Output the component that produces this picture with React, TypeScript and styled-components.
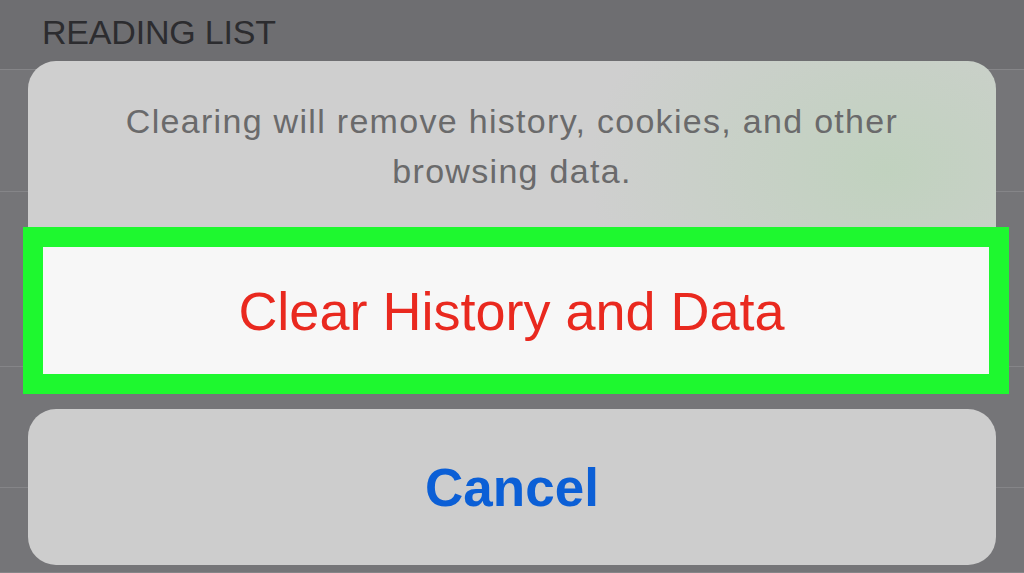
import React from "react";
import styled, { createGlobalStyle } from "styled-components";

const Global = createGlobalStyle`
  html, body { margin: 0; padding: 0; }
  body {
    background: #6f6f72;
    font-family: "Liberation Sans", Arial, sans-serif;
    overflow: hidden;
  }
`;

const Screen = styled.div`
  position: relative;
  width: 1024px;
  height: 573px;
  overflow: hidden;
  background: #747477;
`;

const SectionHeader = styled.div`
  height: 70px;
  box-sizing: border-box;
  padding: 15px 0 0 42px;
  background: #6e6e71;
  color: #2c2c2f;
  font-size: 34px;
  line-height: 34px;
  letter-spacing: -0.2px;
  border-bottom: 1px solid #858588;
`;

const Row = styled.div<{ $h: number }>`
  height: ${(p) => p.$h}px;
  box-sizing: border-box;
  border-bottom: 1px solid #858588;
  background: #757578;
`;

const Overlay = styled.div`
  position: absolute;
  inset: 0;
  display: flex;
  flex-direction: column;
  padding: 61px 28px 0 28px;
`;

const MessageCard = styled.div`
  display: flex;
  flex-direction: column;
  border-radius: 28px 28px 0 0;
  background:
    radial-gradient(ellipse 300px 220px at 860px 110px, rgba(192, 210, 190, 0.95), rgba(200, 212, 198, 0) 100%),
    #cfcfcf;
`;

const Message = styled.p`
  margin: 0;
  height: 166px;
  box-sizing: border-box;
  padding-top: 35px;
  text-align: center;
  color: #6a6a6b;
  font-size: 34px;
  line-height: 50px;
  letter-spacing: 1.3px;
`;

const Highlight = styled.div`
  margin: 0 -13px 0 -5px;
  border: 20px solid #1ef82f;
`;

const ActionButton = styled.button<{ $color: string; $bold?: boolean; $size: number }>`
  display: flex;
  align-items: center;
  justify-content: center;
  width: 100%;
  border: none;
  font-family: "Liberation Sans", Arial, sans-serif;
  font-size: ${(p) => p.$size}px;
  font-weight: ${(p) => (p.$bold ? 700 : 400)};
  color: ${(p) => p.$color};
  cursor: pointer;
`;

const DestructiveButton = styled(ActionButton)`
  height: 127px;
  padding: 0 9px 0 0;
  background: #f7f7f7;
`;

const CancelButton = styled(ActionButton)`
  margin-top: 15px;
  height: 156px;
  padding: 0;
  border-radius: 28px;
  background: #cdcdcd;
`;

export default function App() {
  return (
    <Screen>
      <Global />
      <SectionHeader>READING LIST</SectionHeader>
      <Row $h={122} />
      <Row $h={175} />
      <Row $h={121} />
      <Row $h={85} />
      <Overlay>
        <MessageCard>
          <Message>
            Clearing will remove history, cookies, and other
            <br />
            browsing data.
          </Message>
          <Highlight>
            <DestructiveButton $color="#e9291f" $size={54}>
              Clear History and Data
            </DestructiveButton>
          </Highlight>
        </MessageCard>
        <CancelButton $color="#0b5fd6" $size={53} $bold>
          Cancel
        </CancelButton>
      </Overlay>
    </Screen>
  );
}
